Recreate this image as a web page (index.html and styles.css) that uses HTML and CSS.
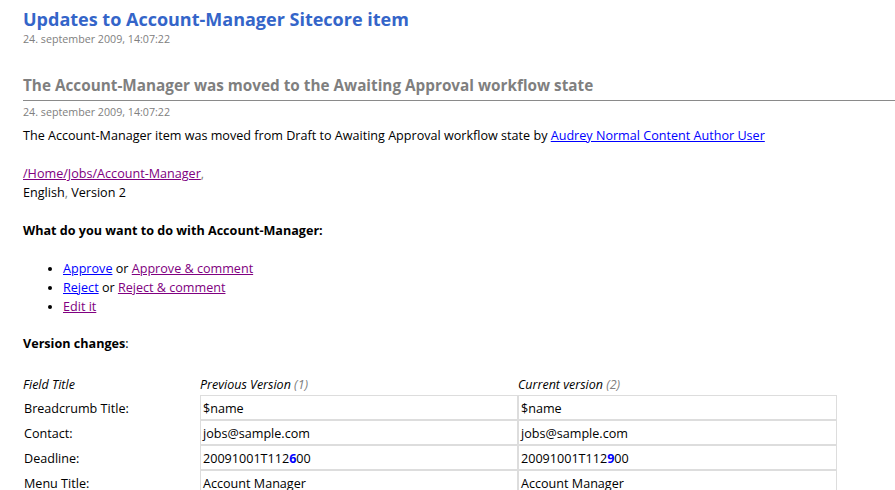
FILE: index.html
```html
<!DOCTYPE html>
<html>
<head>
<meta charset="utf-8">
<link rel="stylesheet" href="styles.css">
</head>
<body>
<div class="page">
  <h1 class="title">Updates to Account-Manager Sitecore item</h1>
  <div class="date">24. september 2009, 14:07:22</div>

  <h2 class="subtitle">The Account-Manager was moved to the Awaiting Approval workflow state</h2>
  <div class="date">24. september 2009, 14:07:22</div>

  <p class="para">The Account-Manager item was moved from Draft to Awaiting Approval workflow state by <a class="link" href="#">Audrey Normal Content Author User</a></p>

  <p class="para"><a class="visited" href="#">/Home/Jobs/Account-Manager</a><span class="grey">,</span><br>English<span class="grey">,</span> Version 2</p>

  <p class="para strong">What do you want to do with Account-Manager:</p>

  <ul class="actions">
    <li><a class="link" href="#">Approve</a> or <a class="visited" href="#">Approve &amp; comment</a></li>
    <li><a class="link" href="#">Reject</a> or <a class="visited" href="#">Reject &amp; comment</a></li>
    <li><a class="visited" href="#">Edit it</a></li>
  </ul>

  <p class="para"><span class="strong">Version changes</span>:</p>

  <table class="changes">
    <thead>
      <tr>
        <th class="c1">Field Title</th>
        <th class="c2">Previous Version <span class="grey">(1)</span></th>
        <th class="c3">Current version <span class="grey">(2)</span></th>
      </tr>
    </thead>
    <tbody>
      <tr><td class="field">Breadcrumb Title:</td><td class="val">$name</td><td class="val">$name</td></tr>
      <tr><td class="field">Contact:</td><td class="val">jobs@sample.com</td><td class="val">jobs@sample.com</td></tr>
      <tr><td class="field">Deadline:</td><td class="val">20091001T112<b class="diff">6</b>00</td><td class="val">20091001T112<b class="diff">9</b>00</td></tr>
      <tr><td class="field">Menu Title:</td><td class="val">Account Manager</td><td class="val">Account Manager</td></tr>
    </tbody>
  </table>
</div>
</body>
</html>
```

FILE: styles.css
```css
html, body {
  margin: 0;
  padding: 0;
  background: #ffffff;
}
body {
  font-family: "Open Sans", "Noto Sans", "DejaVu Sans", sans-serif;
  font-size: 12.6px;
  line-height: 19px;
  color: #000000;
}
.page {
  padding: 6px 0 0 23px;
}
.title {
  margin: 0;
  font-size: 18px;
  line-height: 26px;
  font-weight: bold;
  color: #3465c9;
}
.date {
  font-size: 10.7px;
  line-height: 14px;
  color: #808080;
}
.subtitle {
  margin: 28px 0 0 0;
  padding-bottom: 4px;
  border-bottom: 1px solid #8a8a8a;
  font-size: 15.3px;
  line-height: 22px;
  font-weight: bold;
  color: #7f7f7f;
}
.subtitle + .date {
  margin-top: 4px;
}
.para {
  margin: 7px 0 19px 0;
}
.strong {
  font-weight: bold;
}
.grey {
  color: #808080;
}
.link {
  color: #0000ff;
}
.visited {
  color: #800080;
}
.actions {
  margin: 0 0 18px 0;
  padding-left: 40px;
}
.changes {
  border-collapse: separate;
  border-spacing: 0;
  margin-top: 16px;
}
.changes th {
  font-weight: normal;
  font-style: italic;
  text-align: left;
  padding: 3px 0 1px 0;
  line-height: 19px;
  font-size: 12.5px;
}
.changes .c1 { width: 177px; }
.changes .c2 { width: 318px; }
.changes .c3 { width: 319px; }
.changes td {
  height: 22px;
  padding: 2px 2px 0 2px;
  line-height: 19px;
  box-sizing: border-box;
  vertical-align: middle;
}
.changes td.field {
  padding-left: 1px;
}
.changes td.val {
  height: 25px;
  border: 1px solid #dddddd;
}
.diff {
  color: #0000ff;
  font-weight: bold;
}
```
